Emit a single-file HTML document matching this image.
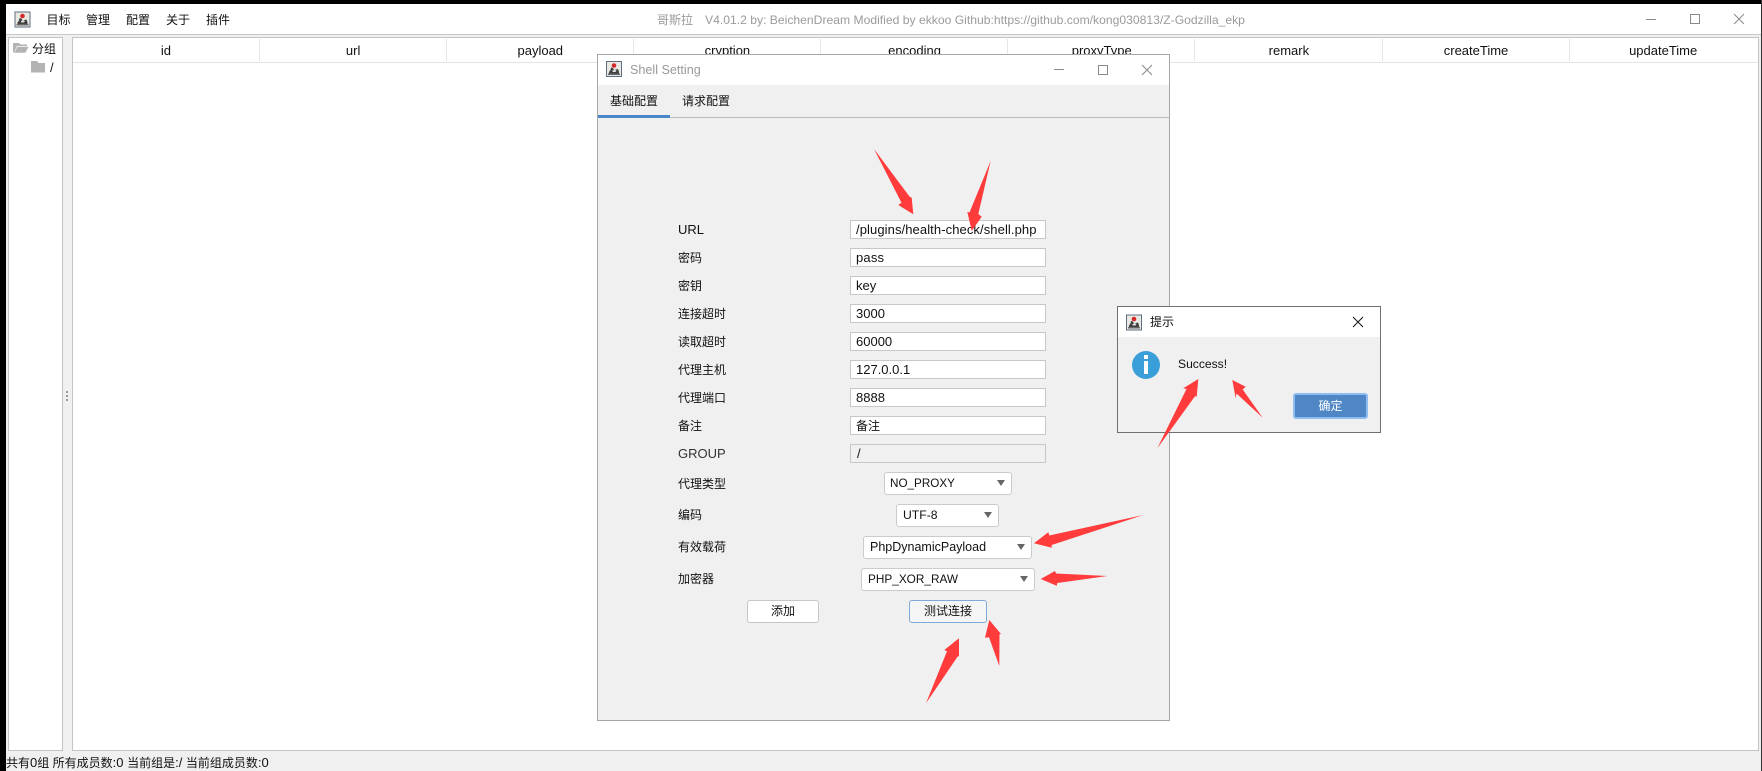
<!DOCTYPE html>
<html><head><meta charset="utf-8"><title>Shell Setting</title>
<style>
html,body{margin:0;padding:0;width:1762px;height:771px;overflow:hidden;background:#fff}
body{position:relative;font:13px/18px "Liberation Sans","Noto Sans CJK SC",sans-serif;color:#111}
div,span{position:absolute;box-sizing:border-box;white-space:nowrap}
svg{position:absolute;left:0;top:0}
.z{font-size:12px}
.l{left:678px;font-size:12px;height:18px}
.l.la{font-size:13px}
.i{left:850px;width:196px;height:19px;background:#fff;border:1px solid #c8c8c8;line-height:17px;padding-left:6px}
.c{height:23px;background:#fff;border:1px solid #cbcbcb;border-radius:3px;line-height:21px;padding-left:6px}
.c:after{content:"";position:absolute;right:6px;top:7px;border-left:4.5px solid transparent;border-right:4.5px solid transparent;border-top:6px solid #666}
.h{top:39px;height:24px;width:187.15px;text-align:center;line-height:24px}
.s{top:39px;width:1px;height:22px;background:#e6e6e6}
.m{top:11px;font-size:12px}
</style></head><body>
<div style="left:0;top:0;width:1762px;height:771px;background:#f0f0f0"></div>
<div style="left:0;top:0;width:1762px;height:3.5px;background:#000"></div>
<div style="left:0;top:0;width:5.5px;height:771px;background:#000"></div>
<div style="left:1761px;top:0;width:1px;height:771px;background:#333"></div>

<div style="left:5.5px;top:4px;width:1755.5px;height:30px;background:#fff"></div>
<div style="left:5.5px;top:34px;width:1755.5px;height:1px;background:#c8c8c8"></div>

<svg width="1762" height="771" style="z-index:1">
<defs>
<g id="ic"><rect x=".5" y=".5" width="15" height="15" fill="#e9e9e4" stroke="#5d6f80"/><path d="M3 13.5 L3 11 L4.500 9 L5 6.500 L7 7 L8 9 L12 8 L13 11 L13 13.5Z" fill="#3f3f3f"/><path d="M2 14h12v-1.600H2z" fill="#666"/><circle cx="8" cy="4.500" r="2.300" fill="#d42a2a"/><path d="M6 10l2.500-1.500 2 1-1 1.500H7z" fill="#ddd"/></g>
</defs>
<use href="#ic" x="14.5" y="11.5"/>
<g fill="none" stroke="#8a8a8a" stroke-width="1">
<path d="M1646 19.5h10"/><rect x="1690.5" y="14.5" width="9" height="9"/><path d="M1734 14l10 10M1744 14l-10 10"/>
</g>
<path d="M13 43h6l1.500 1.500H27v1.500H17l-3 6.500h-1z" fill="#b3b3b3"/><path d="M17.500 46.800H28.500l-3 6H14.200z" fill="#b3b3b3"/>
<path d="M31 61h6l1.500 2H45v9.500H31z" fill="#b3b3b3"/>
</svg>

<div class="m" style="left:46.500px">目标</div>
<div class="m" style="left:86px">管理</div>
<div class="m" style="left:126px">配置</div>
<div class="m" style="left:166px">关于</div>
<div class="m" style="left:206px">插件</div>
<div style="left:657px;top:11px;color:#9b9b9b;font-size:12.150px"><span class="z" style="position:static">哥斯拉</span><span style="position:static;display:inline-block;width:12px"></span>V4.01.2 by: BeichenDream Modified by ekkoo Github:https://github.com/kong030813/Z-Godzilla_ekp</div>

<div style="left:8px;top:37px;width:55px;height:714px;background:#fff;border:1px solid #c4c4c4"></div>
<div class="z" style="left:32px;top:40px;z-index:2">分组</div>
<div style="left:50px;top:59px;z-index:2">/</div>
<div style="left:66px;top:391px;width:2px;height:2px;background:#999;box-shadow:0 4px #999,0 8px #999"></div>

<div style="left:72px;top:37px;width:1687px;height:714px;background:#fff;border:1px solid #c4c4c4"></div>
<div style="left:73px;top:62px;width:1685px;height:1px;background:#e4e4e4"></div>
<div class="h" style="left:72.400px">id</div>
<div class="h" style="left:259.550px">url</div>
<div class="h" style="left:446.700px">payload</div>
<div class="h" style="left:633.850px">cryption</div>
<div class="h" style="left:821px">encoding</div>
<div class="h" style="left:1008.150px">proxyType</div>
<div class="h" style="left:1195.300px">remark</div>
<div class="h" style="left:1382.450px">createTime</div>
<div class="h" style="left:1569.600px">updateTime</div>
<div class="s" style="left:259px"></div><div class="s" style="left:446px"></div><div class="s" style="left:633px"></div><div class="s" style="left:820px"></div><div class="s" style="left:1007px"></div><div class="s" style="left:1194px"></div><div class="s" style="left:1382px"></div><div class="s" style="left:1569px"></div>

<div style="left:6px;top:754px;height:18px"><span class="z" style="position:static">共有</span>0<span class="z" style="position:static">组 所有成员数</span>:0 <span class="z" style="position:static">当前组是</span>:/ <span class="z" style="position:static">当前组成员数</span>:0</div>

<div style="left:597px;top:54px;width:573px;height:667px;background:#f0f0f0;border:1px solid #a6a6a6;z-index:3"></div>
<div style="left:598px;top:55px;width:571px;height:30px;background:#fff;z-index:3"></div>
<div style="left:598px;top:117px;width:571px;height:1px;background:#bcbcbc;z-index:3"></div>
<div style="left:598px;top:115px;width:72px;height:3px;background:#4a86c8;z-index:3"></div>
<div style="left:630px;top:61px;color:#999;font-size:12.600px;z-index:3">Shell Setting</div>
<div class="z" style="left:610px;top:92px;z-index:3">基础配置</div>
<div class="z" style="left:682px;top:92px;z-index:3">请求配置</div>

<div id="form" style="left:0;top:0;width:1762px;height:771px;z-index:3">
<div class="l la" style="top:221px">URL</div><div class="i" style="top:220px;padding-left:5px;letter-spacing:.09px">/plugins/health-check/shell.php</div>
<div class="l" style="top:249px">密码</div><div class="i" style="top:248px;padding-left:5px;letter-spacing:.2px">pass</div>
<div class="l" style="top:277px">密钥</div><div class="i" style="top:276px;padding-left:5px">key</div>
<div class="l" style="top:305px">连接超时</div><div class="i" style="top:304px;padding-left:5px">3000</div>
<div class="l" style="top:333px">读取超时</div><div class="i" style="top:332px;padding-left:5px">60000</div>
<div class="l" style="top:361px">代理主机</div><div class="i" style="top:360px;padding-left:5px">127.0.0.1</div>
<div class="l" style="top:389px">代理端口</div><div class="i" style="top:388px;padding-left:5px">8888</div>
<div class="l" style="top:417px">备注</div><div class="i z" style="top:416px;padding-left:5px;line-height:19px">备注</div>
<div class="l la" style="top:445px;color:#333">GROUP</div><div class="i" style="top:444px;background:#f0f0f0;padding-left:6px">/</div>
<div class="l" style="top:475px">代理类型</div><div class="c" style="left:884px;top:472px;width:128px;font-size:11.700px;padding-left:5px">NO_PROXY</div>
<div class="l" style="top:506px">编码</div><div class="c" style="left:896px;top:504px;width:103px;font-size:12.200px">UTF-8</div>
<div class="l" style="top:538px">有效载荷</div><div class="c" style="left:863px;top:536px;width:169px;font-size:12.500px">PhpDynamicPayload</div>
<div class="l" style="top:570px">加密器</div><div class="c" style="left:861px;top:568px;width:174px;font-size:11.800px">PHP_XOR_RAW</div>
<div class="z" style="left:747px;top:600px;width:72px;height:23px;background:#fff;border:1px solid #c6c6c6;border-radius:3px;text-align:center;line-height:21px">添加</div>
<div class="z" style="left:909px;top:600px;width:78px;height:23px;background:#f5f5f5;border:1px solid #7fa9d8;border-radius:3px;text-align:center;line-height:21px">测试连接</div>
</div>

<svg width="1762" height="771" style="z-index:4">
<use href="#ic" x="606" y="61"/>
<g fill="none" stroke="#8a8a8a" stroke-width="1">
<path d="M1054 69.500h10"/><rect x="1098.500" y="65.500" width="9" height="9"/><path d="M1142 65l10 10M1152 65l-10 10"/>
</g>
</svg>

<div style="left:1117px;top:306px;width:264px;height:127px;background:#f0f0f0;border:1px solid #707070;z-index:5"></div>
<div style="left:1118px;top:307px;width:262px;height:30px;background:#fff;z-index:5"></div>
<div class="z" style="left:1150px;top:313px;z-index:5">提示</div>
<div style="left:1178px;top:355px;font-size:12.100px;z-index:5">Success!</div>
<div style="left:1293px;top:393px;width:75px;height:26px;background:#4f86c6;border:2px solid #8fbdf2;border-radius:3px;z-index:5"></div>
<div class="z" style="left:1293px;top:393px;width:75px;height:26px;text-align:center;line-height:26px;color:#fff;z-index:5">确定</div>

<svg width="1762" height="771" style="z-index:6">
<use href="#ic" x="1126" y="314.500"/>
<path d="M1353 317l10 10M1363 317l-10 10" fill="none" stroke="#111" stroke-width="1"/>
<circle cx="1146" cy="365" r="14" fill="#3a9fd8"/>
<rect x="1144" y="355" width="4" height="4" fill="#fff"/><rect x="1144" y="361" width="4" height="13" fill="#fff"/>
<g fill="#ff3b3b">
<polygon points="874,149 909.500,196.500 911.700,197.700 913.300,214.300 898.300,205 901.500,202.800"/>
<polygon points="990.700,160.700 978.300,214 981.700,216.700 971.700,231 967.300,211.700 969.500,212.500"/>
<polygon points="1143.300,515 1049.300,535.500 1048.300,532.300 1034,543.300 1051.700,547.700 1051.700,545"/>
<polygon points="1107.300,576 1056,573.500 1055,571 1040.700,579 1056.700,585.700 1057.300,583"/>
<polygon points="926,703.300 958,656 959,656.700 959,638.300 944.300,650 947,651.300"/>
<polygon points="999.300,666 999.500,634.300 1001,634 989.300,620 985,637.700 989,637.200"/>
<polygon points="1157.300,448.300 1195,396.200 1196.700,396.700 1198.300,379 1183.300,388.300 1186.500,389"/>
<polygon points="1262.700,417.700 1242.700,389.500 1245.700,386.700 1232.300,380 1235.700,398.300 1236.500,393.500"/>
</g>
</svg>
</body></html>
